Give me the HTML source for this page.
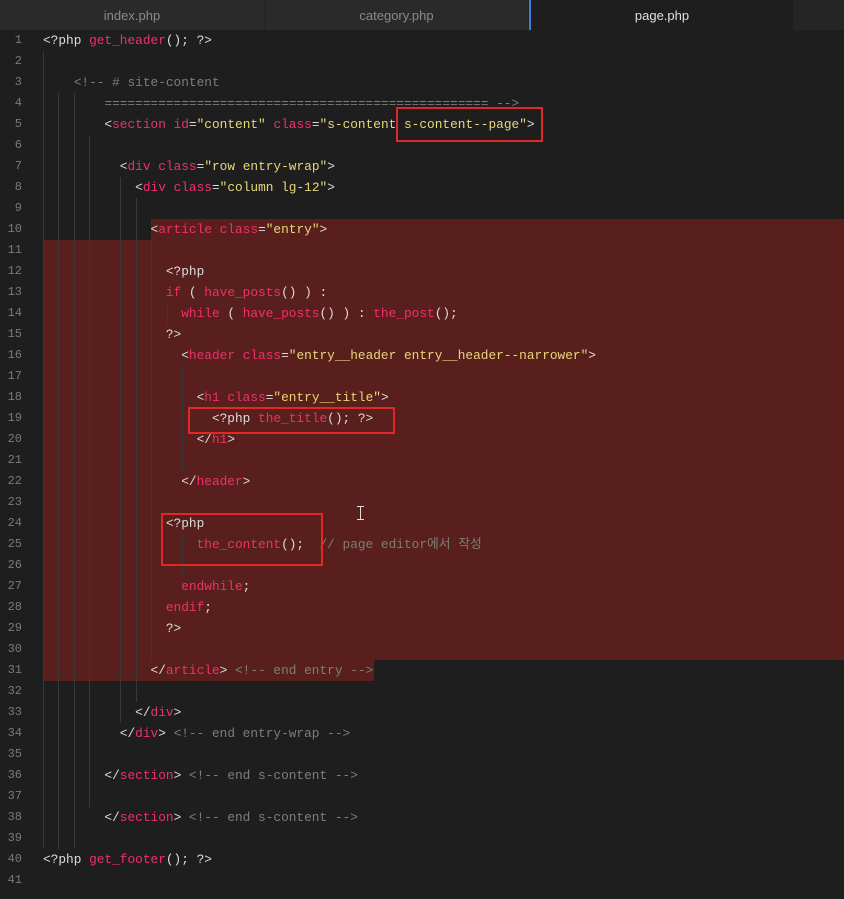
<!DOCTYPE html>
<html><head><meta charset="utf-8"><style>
body{margin:0;width:844px;height:899px;background:#1e1e1e;overflow:hidden;position:relative;font-family:"Liberation Mono","Noto Sans CJK KR",monospace;}
.tabs{position:absolute;left:0;top:0;width:844px;height:30px;background:#252526;}
.tab{position:absolute;top:0;height:30px;text-align:center;color:#8a8a8a;font:13px "Liberation Sans",sans-serif;line-height:31px;background:#2a2a2a;}
.sel{position:absolute;background:#591f1d;}
.g{position:absolute;width:1px;background:#383838;}
pre{margin:0;position:absolute;left:43px;top:30px;font:12.8px/21px "Liberation Mono","Noto Sans CJK KR",monospace;color:#dcdcdc;}
.num{position:absolute;left:0;top:30px;width:22px;text-align:right;font:12px/21px "Liberation Mono",monospace;color:#7a7a7a;}
.t{color:#f0306a}.s{color:#e8d77a}.c{color:#7e7e76}.k{color:#f0306a}
.box{position:absolute;border:2px solid #e02828;box-sizing:border-box;}
</style></head><body>
<div class="tabs">
<div class="tab" style="left:0;width:264px">index.php</div>
<div class="tab" style="left:265px;width:263px">category.php</div>
<div class="tab" style="left:529px;width:264px;background:#1e1e1e;color:#e0e0e0;border-left:2px solid #3b7fd8;box-sizing:border-box">page.php</div>
</div>
<div class="sel" style="left:151px;top:219px;width:693px;height:21px"></div>
<div class="sel" style="left:43px;top:240px;width:801px;height:420px"></div>
<div class="sel" style="left:43px;top:660px;width:331px;height:21px"></div>
<div class="g" style="left:43px;top:51px;height:798px"></div>
<div class="g" style="left:58px;top:93px;height:756px"></div>
<div class="g" style="left:74px;top:93px;height:756px"></div>
<div class="g" style="left:89px;top:135px;height:672px"></div>
<div class="g" style="left:120px;top:177px;height:546px"></div>
<div class="g" style="left:136px;top:198px;height:504px"></div>
<div class="g" style="left:151px;top:240px;height:420px"></div>
<div class="g" style="left:167px;top:303px;height:21px"></div>
<div class="g" style="left:182px;top:366px;height:105px"></div>
<div class="g" style="left:182px;top:534px;height:42px"></div>
<div class="num">1<br>2<br>3<br>4<br>5<br>6<br>7<br>8<br>9<br>10<br>11<br>12<br>13<br>14<br>15<br>16<br>17<br>18<br>19<br>20<br>21<br>22<br>23<br>24<br>25<br>26<br>27<br>28<br>29<br>30<br>31<br>32<br>33<br>34<br>35<br>36<br>37<br>38<br>39<br>40<br>41</div>
<pre>&lt;?php <span class="t">get_header</span>(); ?&gt;

    <span class="c">&lt;!-- # site-content</span>
        <span class="c">================================================== --&gt;</span>
        &lt;<span class="t">section</span> <span class="t">id</span>=<span class="s">"content"</span> <span class="t">class</span>=<span class="s">"s-content s-content--page"</span>&gt;

          &lt;<span class="t">div</span> <span class="t">class</span>=<span class="s">"row entry-wrap"</span>&gt;
            &lt;<span class="t">div</span> <span class="t">class</span>=<span class="s">"column lg-12"</span>&gt;

              &lt;<span class="t">article</span> <span class="t">class</span>=<span class="s">"entry"</span>&gt;

                &lt;?php
                <span class="k">if</span> ( <span class="t">have_posts</span>() ) :
                  <span class="k">while</span> ( <span class="t">have_posts</span>() ) : <span class="t">the_post</span>();
                ?&gt;
                  &lt;<span class="t">header</span> <span class="t">class</span>=<span class="s">"entry__header entry__header--narrower"</span>&gt;

                    &lt;<span class="t">h1</span> <span class="t">class</span>=<span class="s">"entry__title"</span>&gt;
                      &lt;?php <span class="t">the_title</span>(); ?&gt;
                    &lt;/<span class="t">h1</span>&gt;

                  &lt;/<span class="t">header</span>&gt;

                &lt;?php
                    <span class="t">the_content</span>();  <span class="c">// page editor에서 작성</span>

                  <span class="k">endwhile</span>;
                <span class="k">endif</span>;
                ?&gt;

              &lt;/<span class="t">article</span>&gt; <span class="c">&lt;!-- end entry --&gt;</span>

            &lt;/<span class="t">div</span>&gt;
          &lt;/<span class="t">div</span>&gt; <span class="c">&lt;!-- end entry-wrap --&gt;</span>

        &lt;/<span class="t">section</span>&gt; <span class="c">&lt;!-- end s-content --&gt;</span>

        &lt;/<span class="t">section</span>&gt; <span class="c">&lt;!-- end s-content --&gt;</span>

&lt;?php <span class="t">get_footer</span>(); ?&gt;
</pre>
<div class="box" style="left:396px;top:107px;width:147px;height:35px"></div>
<div class="box" style="left:188px;top:407px;width:207px;height:27px"></div>
<div class="box" style="left:161px;top:513px;width:162px;height:53px"></div>
<div style="position:absolute;left:360px;top:506px;width:1px;height:14px;background:#ddd"></div>
<div style="position:absolute;left:357px;top:506px;width:7px;height:1px;background:#ddd"></div>
<div style="position:absolute;left:357px;top:519px;width:7px;height:1px;background:#ddd"></div>
</body></html>
